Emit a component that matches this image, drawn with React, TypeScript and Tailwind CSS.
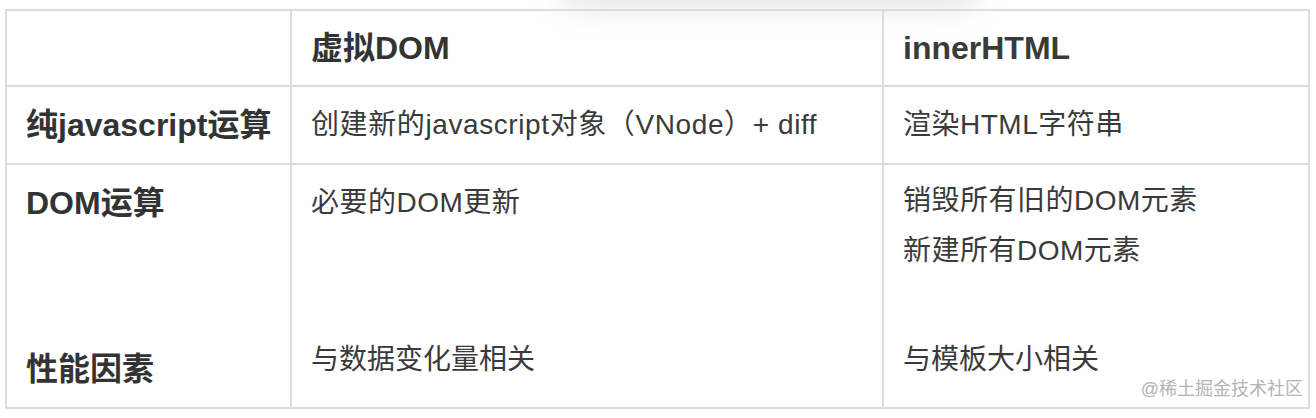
const font = { fontFamily: '"Liberation Sans", "Noto Sans CJK SC", sans-serif' };

export default function App() {
  return (
    <div className="relative h-[418px] w-[1316px] overflow-hidden bg-white" style={font}>
      {/* soft shadow bleeding in from above */}
      <div className="absolute left-[560px] top-[-30px] h-[40px] w-[420px] rounded-full bg-[#e8e8e8] blur-[14px]" />

      <div className="relative ml-[5px] mt-[9px] w-[1305px] border-2 border-[#dcdcdc] text-[#333]">
        {/* header */}
        <div className="grid h-[76px] grid-cols-[285px_592px_1fr] border-b-2 border-[#dcdcdc]">
          <div className="border-r-2 border-[#dcdcdc]" />
          <div className="flex items-center border-r-2 border-[#dcdcdc] pl-[19px] text-[32px] font-bold">
            虚拟DOM
          </div>
          <div className="flex items-center pl-[19px] text-[32px] font-bold text-[#3a3a3a]">innerHTML</div>
        </div>

        {/* 纯javascript运算 */}
        <div className="grid h-[78px] grid-cols-[285px_592px_1fr] border-b-2 border-[#dcdcdc]">
          <div className="flex items-center border-r-2 border-[#dcdcdc] pl-[19px] text-[32px] font-bold">
            纯javascript运算
          </div>
          <div className="flex items-center border-r-2 border-[#dcdcdc] pl-[19px] text-[28px] tracking-[0.6px] text-[#3a3a3a]">
            创建新的javascript对象（VNode）+ diff
          </div>
          <div className="flex items-center pl-[19px] text-[28px] tracking-[0.5px] text-[#3a3a3a]">
            渲染HTML字符串
          </div>
        </div>

        {/* DOM运算 */}
        <div className="grid h-[145px] grid-cols-[285px_592px_1fr]">
          <div className="border-r-2 border-[#dcdcdc] pl-[19px] pt-[13px] text-[32px] font-bold leading-[50px]">
            DOM运算
          </div>
          <div className="border-r-2 border-[#dcdcdc] pl-[19px] pt-[13px] text-[28px] leading-[50px] tracking-[0.5px] text-[#3a3a3a]">
            必要的DOM更新
          </div>
          <div className="pl-[19px] pt-[11px] text-[28px] leading-[50px] tracking-[0.5px] text-[#3a3a3a]">
            <div>销毁所有旧的DOM元素</div>
            <div>新建所有DOM元素</div>
          </div>
        </div>

        {/* 性能因素 */}
        <div className="grid h-[97px] grid-cols-[285px_592px_1fr]">
          <div className="border-r-2 border-[#dcdcdc] pl-[19px] pt-[34px] text-[32px] font-bold leading-[50px]">
            性能因素
          </div>
          <div className="border-r-2 border-[#dcdcdc] pl-[19px] pt-[25px] text-[28px] leading-[50px] text-[#3a3a3a]">
            与数据变化量相关
          </div>
          <div className="pl-[19px] pt-[25px] text-[28px] leading-[50px] text-[#3a3a3a]">与模板大小相关</div>
        </div>

        {/* watermark */}
        <div className="absolute bottom-[9px] right-[5px] text-[18px] leading-none text-[#b4b4b4]">
          @稀土掘金技术社区
        </div>
      </div>
    </div>
  );
}
